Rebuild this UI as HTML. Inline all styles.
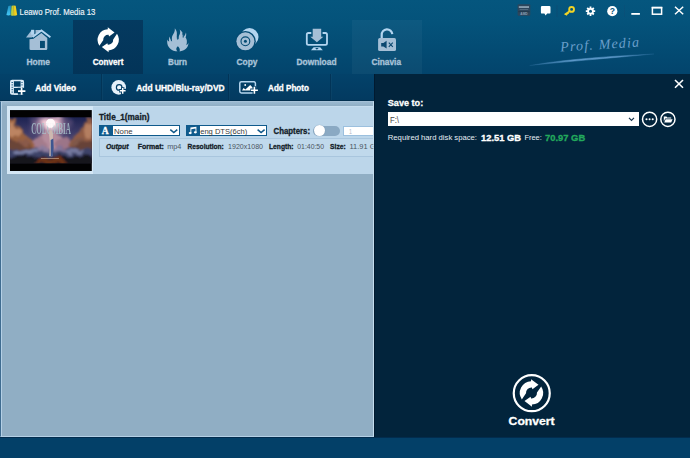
<!DOCTYPE html>
<html><head><meta charset="utf-8"><title>Leawo Prof. Media 13</title>
<style>
*{margin:0;padding:0;box-sizing:border-box}
html,body{width:690px;height:458px;overflow:hidden;background:#034068;font-family:"Liberation Sans",sans-serif}
.abs{position:absolute}
#top{left:0;top:0;width:690px;height:74px;background:linear-gradient(#05567e 0px,#04537b 22px,#034b73 50px,#03446c 74px)}
.tab{top:20px;width:69.6px;height:53.5px}
.tab.sel{background:linear-gradient(#043a60,#033458)}
.tab.cin{background:rgba(255,255,255,0.04)}
#toolbar{left:0;top:73.5px;width:690px;height:27.5px;background:linear-gradient(#03426a,#033a60);border-bottom:1px solid #02304f}
.sep{top:74px;width:1px;height:26px;background:#023457;box-shadow:1px 0 0 rgba(255,255,255,0.03)}
#content{left:0;top:100.8px;width:373.5px;height:335.9px;box-shadow:inset 1px 0 0 #b4d0e6;background:linear-gradient(#9ab9d0 0px,#90aec4 4px);border-left:1px solid #3f6c90;border-top:1px solid #a4c0d6;border-right:1px solid #c4ddee;border-bottom:1px solid #b4d0e6}
#card{left:7px;top:106.4px;width:366px;height:67.6px;background:#bcd6ea;border-top:1px solid #c6ddee}
#tframe{left:7px;top:106.4px;width:86.2px;height:67.6px;background:#d4e7f5}
#outbox{left:99px;top:138.4px;width:274px;height:18.4px;background:#c0d9ec;border:1px solid #a9c6de;border-right:none}
.dd{top:125.4px;height:10.6px;background:#fff;border:1px solid #0f5a8c}
.ddi{top:125.4px;height:10.6px;background:#0f5a8c}
#toggle{left:313.3px;top:125.5px;width:27px;height:10.5px;border-radius:5.3px;background:#8aa9c3}
#knob{left:313.8px;top:125.3px;width:10.9px;height:10.9px;border-radius:50%;background:#fff;box-shadow:0 0 1px #6d8ca8}
#chap{left:343.4px;top:125.8px;width:30px;height:10.2px;background:#fff;border:1px solid #9cc0de;border-right:none}
#bottom{left:0;top:436.7px;width:690px;height:21.3px;background:#034068;border-top:1px solid #022c4e}
#panel{left:373.5px;top:74.2px;width:316.5px;height:362.8px;background:#02243c;border-left:1px solid #011a30}
#saveinput{left:388px;top:112.3px;width:250.8px;height:13.6px;background:#fff}
svg.ov{left:0;top:0}
</style></head><body>
<div id="top" class="abs"></div>
<div class="abs tab" style="left:3.5px"></div>
<div class="abs tab sel" style="left:73.4px;width:69.2px"></div>
<div class="abs tab" style="left:142.7px"></div>
<div class="abs tab" style="left:212.3px"></div>
<div class="abs tab" style="left:281.9px"></div>
<div class="abs tab cin" style="left:351.5px;width:70.3px"></div>
<div id="toolbar" class="abs"></div>
<div class="abs sep" style="left:101px"></div>
<div class="abs sep" style="left:228px"></div>
<div class="abs sep" style="left:329.5px"></div>
<div id="content" class="abs"></div>
<div id="card" class="abs"></div>
<div id="tframe" class="abs"></div>
<div id="outbox" class="abs"></div>
<svg class="abs" style="left:10px;top:109.7px" width="81.8" height="61.4" viewBox="0 0 82 61.4">
<defs>
<linearGradient id="sky" x1="0" y1="0" x2="0" y2="1"><stop offset="0" stop-color="#1c2250"/><stop offset="0.45" stop-color="#4a4470"/><stop offset="1" stop-color="#2a2840"/></linearGradient>
<radialGradient id="glow" cx="0.5" cy="0.5" r="0.5"><stop offset="0" stop-color="#fff6f8"/><stop offset="0.28" stop-color="#f4c8d4" stop-opacity="0.95"/><stop offset="0.6" stop-color="#b088a8" stop-opacity="0.55"/><stop offset="1" stop-color="#6a5a88" stop-opacity="0"/></radialGradient>
<filter id="b1" x="-20%" y="-20%" width="140%" height="140%"><feTurbulence type="fractalNoise" baseFrequency="0.11" numOctaves="3" seed="7" result="n"/><feDisplacementMap in="SourceGraphic" in2="n" scale="9" xChannelSelector="R" yChannelSelector="G" result="d"/><feGaussianBlur in="d" stdDeviation="0.9"/></filter>
<filter id="b2" x="-20%" y="-20%" width="140%" height="140%"><feGaussianBlur stdDeviation="0.6"/></filter>
<clipPath id="fr"><rect x="0" y="7.1" width="82" height="46.2"/></clipPath>
</defs>
<rect width="82" height="61.4" fill="#020203"/>
<g clip-path="url(#fr)">
<rect x="0" y="7" width="82" height="47" fill="url(#sky)"/>
<g filter="url(#b1)">
<ellipse cx="40.5" cy="14" rx="24" ry="17" fill="url(#glow)"/>
<ellipse cx="41" cy="30" rx="11" ry="9" fill="#b48c9c"/>
<ellipse cx="30" cy="34" rx="8" ry="6.5" fill="#a47c8c"/>
<ellipse cx="53" cy="34" rx="8" ry="6.5" fill="#9c7488"/>
<path d="M-2,8 L4,9 L9,17 L14,23 L20,29 L25,36 L20,41 L-2,41 Z" fill="#98603f"/>
<path d="M-2,12 L4,13 L10,21 L8,27 L-2,25 Z" fill="#bc8462"/>
<path d="M8,30 L16,29 L21,35 L12,38 Z" fill="#8a5a48"/>
<path d="M84,8 L78,9 L73,17 L68,23 L62,29 L57,36 L62,41 L84,41 Z" fill="#905c44"/>
<path d="M84,12 L78,13 L73,21 L75,28 L84,26 Z" fill="#b47e60"/>
<path d="M74,30 L66,29 L61,35 L70,38 Z" fill="#80584a"/>
<path d="M-2,30 L10,33 L22,38 L-2,41 Z" fill="#6a4438"/><path d="M84,30 L72,33 L60,38 L84,41 Z" fill="#664238"/><rect x="-2" y="38.5" width="86" height="9" fill="#3e4368"/>
<ellipse cx="16" cy="41.5" rx="11" ry="2.6" fill="#7a80a6"/>
<ellipse cx="64" cy="41.5" rx="11" ry="2.6" fill="#74789e"/>
<ellipse cx="33" cy="40" rx="6" ry="3" fill="#8c7c9c"/>
<ellipse cx="49" cy="40" rx="6" ry="3" fill="#84749a"/>
<rect x="-2" y="46.5" width="86" height="9" fill="#16131e"/>
<path d="M24,54 L31,47.5 L50,47.5 L57,54 Z" fill="#6c3018"/>
</g>
<g filter="url(#b2)">
<ellipse cx="40.6" cy="13" rx="4.6" ry="4.4" fill="#fff8fa"/>
<path d="M39.6,20.6 L42,20.6 L43,24 L43.2,34 L42.6,46.4 L39.4,46.4 L40,34 L39.2,24 Z" fill="#cdb8b0"/>
<path d="M40.8,30 L43.4,28.4 L43.8,38 L42.8,46.4 L40.8,46.4 Z" fill="#3c5690"/>
<rect x="31" y="48" width="18" height="1" fill="#c8a890" opacity="0.7"/>
</g>
<text x="21.3" y="24.4" textLength="39.8" lengthAdjust="spacingAndGlyphs" font-family="Liberation Serif, serif" font-weight="bold" font-size="16" fill="#a9c3cc" opacity="0.8">COLUMBIA</text>
<g filter="url(#b2)"><ellipse cx="40.6" cy="13.4" rx="3.6" ry="4.4" fill="#fff8fa" opacity="0.9"/><path d="M39.6,20.6 L42,20.6 L42.8,26 L39.6,26 Z" fill="#cdb8b0"/></g>
</g>
</svg>
<div class="abs ddi" style="left:99px;width:13px"></div>
<div class="abs dd" style="left:111.5px;width:68.6px"></div>
<div class="abs ddi" style="left:186.3px;width:13px"></div>
<div class="abs dd" style="left:198.8px;width:68.3px"></div>
<div id="toggle" class="abs"></div><div id="knob" class="abs"></div>
<div id="chap" class="abs"></div>
<div id="panel" class="abs"></div>
<div id="saveinput" class="abs"></div>
<div id="bottom" class="abs"></div>
<svg class="abs ov" width="690" height="458" viewBox="0 0 690 458">
<defs><clipPath id="cardclip"><rect x="0" y="100" width="373.3" height="80"/></clipPath></defs>
<g>
<defs><linearGradient id="lg1" x1="0" y1="0" x2="0" y2="1"><stop offset="0" stop-color="#1f8fc0"/><stop offset="1" stop-color="#45c8f6"/></linearGradient>
<linearGradient id="lg2" x1="0" y1="0" x2="1" y2="0"><stop offset="0" stop-color="#8fc050"/><stop offset="1" stop-color="#e4d830"/></linearGradient></defs>
<path d="M8.4,5.9 L10.9,5.6 L10.5,15 Q8.4,15.8 6.4,15 Z" fill="url(#lg1)"/>
<path d="M11.5,5.8 L13.6,5.5 L14,15.6 Q12.2,16 10.7,15.2 Z" fill="url(#lg2)"/>
<path d="M13.6,5.5 L15.7,5.8 L17.2,15 Q15.6,15.9 14,15.6 Z" fill="#f2d01f"/>
<path d="M13.7,6 L14,15.4" stroke="#c8a818" stroke-width="0.5" fill="none"/>
</g>
<g>
<path d="M26,37.5 L31.4,30.6 L35.4,30 L42.4,30 L41.4,31.2 L33.4,37.5 Z" fill="#9fbcd5"/>
<rect x="34.2" y="29.6" width="1.3" height="4.6" fill="#044d76"/>
<rect x="31.1" y="29.8" width="3.1" height="4.9" fill="#b3d5f0"/>
<path d="M29.5,39.2 L33.4,38.8 L41.4,33 L47.3,38 L47.3,48.7 Q47.3,50 46,50 L30.8,50 Q29.5,50 29.5,48.7 Z" fill="#a5bfd6"/>
<path d="M32.2,38.2 L41.4,31 L49.6,38" fill="none" stroke="#044a72" stroke-width="1.5"/>
<path d="M32.6,36.9 L41.4,30.4 L50.4,37.2" fill="none" stroke="#b3d5f0" stroke-width="1.9" stroke-linejoin="miter"/>
<rect x="40" y="40.9" width="4.9" height="7.1" fill="#044a72"/>
</g>
<path d="M99.41,45.73 A10.60,10.60 0 0 1 107.83,29.21 L107.76,27.31 L114.56,32.48 L109.05,36.40 L108.55,34.81 A5.00,5.00 0 0 0 103.21,40.15 Z" fill="#fff"/><path d="M116.99,33.87 A10.60,10.60 0 0 1 108.57,50.39 L108.64,52.29 L101.84,47.12 L107.35,43.20 L107.85,44.79 A5.00,5.00 0 0 0 113.19,39.45 Z" fill="#fff"/>
<path fill="#a5bfd6" d="M177.6,51.3 C175.5,49.6 176.3,47.3 177.9,46.2 C179.2,47.4 180.4,49.2 179.6,51.4
C184.5,51 188.6,47.6 188.5,42.6 C188.2,44 187.3,45 186.3,45.3 C187.4,42.3 187,39.3 185.6,37.6 C186.4,35.6 186.4,33.8 185.9,32.6 C185.6,34.6 184.6,35.8 183.6,36.8
C183.4,34 182.2,31.2 179.6,29.4 C180.6,31.6 180.2,33.6 179.2,35.2 C178.6,36.6 178.6,38 179,39.2 C177.6,38.4 176.6,36.8 176.8,35
C177.2,32.4 176.4,30 174.8,28.3 C175.2,31 174,33.2 172.8,35 C171.8,36.6 171.4,38.6 171.8,40.4 C170.6,39.6 169.8,38.2 169.8,36.6
C168.8,38.4 168.8,40 169.2,41.6 C168.2,41.2 167.6,40.4 167.4,39.6 C166.2,45.2 169.6,50.4 175.6,51.3 Z"/>
<path d="M177.7,39.6 C176.9,37.6 177.3,35.4 178.2,33.6 M183.2,37.6 C183.4,36 183.2,34.6 182.6,33.4 M171.6,41.2 C171,39.6 171,38 171.6,36.6" fill="none" stroke="#044d76" stroke-width="1"/>
<g>
<circle cx="249.5" cy="37" r="9" fill="#b3d5f0"/>
<circle cx="245.4" cy="41.3" r="10.4" fill="#044a72"/>
<circle cx="245.4" cy="41.3" r="9" fill="#a5bfd6"/>
<circle cx="245.4" cy="41.3" r="4.4" fill="none" stroke="#044a72" stroke-width="1.1"/>
<circle cx="245.4" cy="41.3" r="1.5" fill="#044a72"/>
</g>
<g>
<path d="M311.3,33 L308.4,33 Q306.8,33 306.8,34.6 L306.8,43.2 Q306.8,44.8 308.4,44.8 L325.4,44.8 Q327,44.8 327,43.2 L327,34.6 Q327,33 325.4,33 L322.6,33" fill="none" stroke="#b3d5f0" stroke-width="1.8"/>
<path d="M312.7,28.7 L321.2,28.7 L321.2,36.7 L323.4,36.7 L316.9,42.2 L310.3,36.7 L312.7,36.7 Z" fill="#a5bfd6"/>
<path d="M313.6,47.3 L320.2,47.3 L322.8,50.3 L311,50.3 Z" fill="#b3d5f0"/>
<path d="M315.2,48 L316.9,49.8 L318.6,48 Z" fill="#044a72"/>
</g>
<g>
<path d="M381.7,38.4 L381.7,35 A5.3,5.3 0 0 1 392.3,34.2" fill="none" stroke="#b3d5f0" stroke-width="2.2"/>
<rect x="378.1" y="38.1" width="17.9" height="13" rx="1.6" fill="#a5bfd6"/>
<path d="M381.2,43 L383.4,43 L386.6,40.8 L386.6,48.6 L383.4,46.4 L381.2,46.4 Z" fill="#0c4870"/>
<path d="M388.8,42.6 L392.8,46.8 M392.8,42.6 L388.8,46.8" stroke="#0c4870" stroke-width="1.1" fill="none"/>
</g>
<g>
<rect x="10.7" y="80.5" width="12.7" height="13.6" rx="1.4" fill="none" stroke="#dcecf8" stroke-width="1.4"/>
<rect x="10.7" y="80.5" width="3.2" height="13.6" fill="#dcecf8"/>
<rect x="20.6" y="80.5" width="2.8" height="7" fill="#dcecf8"/>
<rect x="13.9" y="86.7" width="8" height="1.3" fill="#dcecf8"/>
<g fill="#1d5a84"><rect x="11.5" y="82" width="1.4" height="1"/><rect x="11.5" y="84.4" width="1.4" height="1"/><rect x="11.5" y="86.8" width="1.4" height="1"/><rect x="11.5" y="89.2" width="1.4" height="1"/><rect x="11.5" y="91.6" width="1.4" height="1"/><rect x="21.4" y="82" width="1.2" height="1"/><rect x="21.4" y="84.4" width="1.2" height="1"/></g>
<rect x="17.6" y="87.8" width="8" height="6.8" fill="#033d64"/>
<rect x="13.9" y="93.4" width="4" height="1.4" fill="#dcecf8"/>
<path d="M21.6,87.6 V94.8 M18,91.2 H25.4" stroke="#fff" stroke-width="1.7"/>
</g>
<g>
<circle cx="118.7" cy="87.4" r="7.3" fill="#e6f1fa"/>
<circle cx="119.2" cy="87.4" r="2.8" fill="none" stroke="#033d64" stroke-width="1.2"/>
<circle cx="119.2" cy="87.4" r="1.4" fill="#f4f9fd"/>
<path d="M122.7,87.2 V94.4 M119.1,90.8 H126.3" stroke="#033d64" stroke-width="3.4"/>
<path d="M122.7,88 V93.8 M119.8,90.8 H125.6" stroke="#fff" stroke-width="1.5"/>
</g>
<g>
<rect x="239.8" y="81.7" width="15.6" height="11.2" rx="1.6" fill="none" stroke="#b6d6ef" stroke-width="1.5"/>
<path d="M242,90.6 L243.6,88 L245.4,89.4 L250.2,85 L254,89 L254,90.6 Z" fill="#fff"/>
<circle cx="245.2" cy="85" r="0.9" fill="#fff"/>
<path d="M254.4,86.2 V94.4 M250.3,90.3 H258.5" stroke="#033d64" stroke-width="3.6"/>
<path d="M254.4,86.8 V93.8 M250.9,90.3 H257.9" stroke="#fff" stroke-width="1.6"/>
</g>
<g>
<rect x="517.6" y="4.2" width="12.7" height="11.6" rx="1" fill="#2d465c"/>
<rect x="518.8" y="6.3" width="10.2" height="1.5" fill="#9db2c3"/>
<rect x="519.6" y="9.2" width="8.6" height="0.8" fill="#5b7287"/>
<rect x="518.2" y="11.4" width="11.5" height="0.7" fill="#1f3548"/>
<path d="M540.9,7.3 Q540.9,6.1 542.1,6.1 L549.3,6.1 Q550.5,6.1 550.5,7.3 L550.5,12.4 Q550.5,13.6 549.3,13.6 L547.2,13.6 L545.6,15.4 L544.4,13.6 L542.1,13.6 Q540.9,13.6 540.9,12.4 Z" fill="#fff"/>
<rect x="556.5" y="5" width="1" height="12" fill="#0e4a74" opacity="0.7"/>
<g stroke="#f2d425" fill="none">
<circle cx="571.6" cy="9.4" r="2.4" stroke-width="1.9"/>
<path d="M569.6,11.2 L564.6,14.6 M566,13.6 L567,15.2 M567.6,12.6 L568.4,13.9" stroke-width="1.7"/>
</g>
<g fill="#fff">
<circle cx="590.5" cy="11.2" r="3.3"/>
<g stroke="#fff" stroke-width="1.8">
<path d="M590.5,6.5 V15.9 M585.8,11.2 H595.2 M587.2,7.9 L593.8,14.5 M593.8,7.9 L587.2,14.5"/>
</g>
</g>
<circle cx="590.5" cy="11.2" r="1.5" fill="#05547c"/>
<circle cx="612.3" cy="11.2" r="5.1" fill="#fff"/>
<rect x="624" y="5" width="1" height="12" fill="#0e4a74" opacity="0.4"/>
<rect x="631.3" y="13" width="8.6" height="1.8" fill="#fff"/>
<rect x="652.4" y="7.6" width="9.2" height="6.6" fill="none" stroke="#fff" stroke-width="1.5"/>
<rect x="651.7" y="6.8" width="10.6" height="1.6" fill="#fff"/>
<path d="M675,6.8 L683.2,14.2 M683.2,6.8 L675,14.2" stroke="#fff" stroke-width="1.5"/>
</g>
<defs><linearGradient id="sw" x1="0" y1="0" x2="1" y2="0"><stop offset="0" stop-color="#4f8ec2" stop-opacity="0.15"/><stop offset="0.35" stop-color="#5f9bcc" stop-opacity="0.95"/><stop offset="0.7" stop-color="#5f9bcc" stop-opacity="0.9"/><stop offset="1" stop-color="#4f8ec2" stop-opacity="0.2"/></linearGradient></defs><path d="M529.5,65.6 C560,59.9 610,56.2 654,54.0 C612,57.9 562,61.9 529.5,65.6 Z" fill="url(#sw)" stroke="url(#sw)" stroke-width="0.5"/>
<g>
<path d="M675,80 L683,87.8 M683,80 L675,87.8" stroke="#fff" stroke-width="1.6"/>
<circle cx="649.6" cy="119.3" r="7.1" fill="none" stroke="#fff" stroke-width="1.5"/>
<circle cx="646.5" cy="119.3" r="1.05" fill="#fff"/><circle cx="649.6" cy="119.3" r="1.05" fill="#fff"/><circle cx="652.7" cy="119.3" r="1.05" fill="#fff"/>
<circle cx="667.9" cy="119.3" r="7.1" fill="none" stroke="#fff" stroke-width="1.5"/>
<path d="M663.8,116.6 L666.4,116.6 L667.2,117.5 L671.2,117.5 L671.2,118.6 L665.2,118.6 L663.8,121.6 Z" fill="#fff"/>
<path d="M665.6,119.2 L672.6,119.2 L671.2,122.4 L664.2,122.4 Z" fill="#fff"/>
<path d="M629,117.8 L631.5,120.4 L634,117.8" fill="none" stroke="#14324d" stroke-width="1.2"/>
</g>
<circle cx="531.75" cy="393.2" r="18.0" fill="none" stroke="#fff" stroke-width="2.2"/>
<path d="M521.83,399.42 A11.66,11.66 0 0 1 531.09,381.25 L531.02,379.16 L538.50,384.85 L532.43,389.16 L531.88,387.41 A5.50,5.50 0 0 0 526.01,393.28 Z" fill="#fff"/><path d="M541.17,386.38 A11.66,11.66 0 0 1 531.91,404.55 L531.98,406.64 L524.50,400.95 L530.57,396.64 L531.12,398.39 A5.50,5.50 0 0 0 536.99,392.52 Z" fill="#fff"/>
<path d="M170.3,129.6 L173.8,132.6 L177.3,129.6" fill="none" stroke="#0f5788" stroke-width="1.5"/>
<path d="M257.6,129.6 L261.1,132.6 L264.6,129.6" fill="none" stroke="#0f5788" stroke-width="1.5"/>
<g fill="#fff"><path d="M190.4,127.6 L196.4,126.8 L196.4,132.4 L195.5,132.4 L195.5,128.6 L191.3,129.2 L191.3,133.2 L190.4,133.2 Z"/><ellipse cx="190.2" cy="133.1" rx="1.5" ry="1.15"/><ellipse cx="195.3" cy="132.3" rx="1.5" ry="1.15"/></g>
<text x="19.60" y="14.80" textLength="75.70" lengthAdjust="spacingAndGlyphs" font-family="Liberation Sans, sans-serif" font-size="9.3" font-weight="normal" font-style="normal" fill="#f0f5fa" stroke="#f0f5fa" stroke-width="0.15" >Leawo Prof. Media 13</text>
<text x="26.50" y="65.20" textLength="23.50" lengthAdjust="spacingAndGlyphs" font-family="Liberation Sans, sans-serif" font-size="8.2" font-weight="bold" font-style="normal" fill="#a9c3d9" stroke="#a9c3d9" stroke-width="0.3" >Home</text>
<text x="92.70" y="65.20" textLength="30.80" lengthAdjust="spacingAndGlyphs" font-family="Liberation Sans, sans-serif" font-size="8.2" font-weight="bold" font-style="normal" fill="#fff" stroke="#fff" stroke-width="0.3" >Convert</text>
<text x="168.00" y="65.20" textLength="19.00" lengthAdjust="spacingAndGlyphs" font-family="Liberation Sans, sans-serif" font-size="8.2" font-weight="bold" font-style="normal" fill="#a9c3d9" stroke="#a9c3d9" stroke-width="0.3" >Burn</text>
<text x="236.50" y="65.20" textLength="21.00" lengthAdjust="spacingAndGlyphs" font-family="Liberation Sans, sans-serif" font-size="8.2" font-weight="bold" font-style="normal" fill="#a9c3d9" stroke="#a9c3d9" stroke-width="0.3" >Copy</text>
<text x="296.50" y="65.20" textLength="40.00" lengthAdjust="spacingAndGlyphs" font-family="Liberation Sans, sans-serif" font-size="8.2" font-weight="bold" font-style="normal" fill="#a9c3d9" stroke="#a9c3d9" stroke-width="0.3" >Download</text>
<text x="371.50" y="65.20" textLength="29.50" lengthAdjust="spacingAndGlyphs" font-family="Liberation Sans, sans-serif" font-size="8.2" font-weight="bold" font-style="normal" fill="#a9c3d9" stroke="#a9c3d9" stroke-width="0.3" >Cinavia</text>
<text x="35.30" y="90.70" textLength="40.70" lengthAdjust="spacingAndGlyphs" font-family="Liberation Sans, sans-serif" font-size="8.2" font-weight="bold" font-style="normal" fill="#fff" stroke="#fff" stroke-width="0.3" >Add Video</text>
<text x="136.20" y="90.70" textLength="88.40" lengthAdjust="spacingAndGlyphs" font-family="Liberation Sans, sans-serif" font-size="8.2" font-weight="bold" font-style="normal" fill="#fff" stroke="#fff" stroke-width="0.3" >Add UHD/Blu-ray/DVD</text>
<text x="268.10" y="90.70" textLength="40.80" lengthAdjust="spacingAndGlyphs" font-family="Liberation Sans, sans-serif" font-size="8.2" font-weight="bold" font-style="normal" fill="#fff" stroke="#fff" stroke-width="0.3" >Add Photo</text>
<text x="99.00" y="120.30" textLength="50.40" lengthAdjust="spacingAndGlyphs" font-family="Liberation Sans, sans-serif" font-size="8.2" font-weight="bold" font-style="normal" fill="#131d28" stroke="#131d28" stroke-width="0.3" >Title_1(main)</text>
<text x="114.00" y="133.70" textLength="18.60" lengthAdjust="spacingAndGlyphs" font-family="Liberation Sans, sans-serif" font-size="7.6" font-weight="normal" font-style="normal" fill="#3a3a3a"  >None</text>
<text x="200.20" y="134.00" textLength="47.10" lengthAdjust="spacingAndGlyphs" font-family="Liberation Sans, sans-serif" font-size="7.6" font-weight="normal" font-style="normal" fill="#3a3a3a"  >eng DTS(6ch)</text>
<text x="273.50" y="134.30" textLength="36.50" lengthAdjust="spacingAndGlyphs" font-family="Liberation Sans, sans-serif" font-size="8.2" font-weight="bold" font-style="normal" fill="#131d28" stroke="#131d28" stroke-width="0.3" >Chapters:</text>
<text x="349.00" y="133.80" textLength="3.00" lengthAdjust="spacingAndGlyphs" font-family="Liberation Sans, sans-serif" font-size="7.6" font-weight="normal" font-style="normal" fill="#b4bcc4"  >1</text>
<text x="106.00" y="149.20" textLength="22.60" lengthAdjust="spacingAndGlyphs" font-family="Liberation Sans, sans-serif" font-size="7.2" font-weight="bold" font-style="italic" fill="#131d28" stroke="#131d28" stroke-width="0.3" >Output</text>
<text x="137.80" y="149.20" textLength="26.00" lengthAdjust="spacingAndGlyphs" font-family="Liberation Sans, sans-serif" font-size="7.2" font-weight="bold" font-style="normal" fill="#131d28" stroke="#131d28" stroke-width="0.3" >Format:</text>
<text x="167.20" y="149.20" textLength="14.10" lengthAdjust="spacingAndGlyphs" font-family="Liberation Sans, sans-serif" font-size="7.2" font-weight="normal" font-style="normal" fill="#4a5560"  >mp4</text>
<text x="187.50" y="149.20" textLength="36.30" lengthAdjust="spacingAndGlyphs" font-family="Liberation Sans, sans-serif" font-size="7.2" font-weight="bold" font-style="normal" fill="#131d28" stroke="#131d28" stroke-width="0.3" >Resolution:</text>
<text x="228.10" y="149.20" textLength="34.90" lengthAdjust="spacingAndGlyphs" font-family="Liberation Sans, sans-serif" font-size="7.2" font-weight="normal" font-style="normal" fill="#4a5560"  >1920x1080</text>
<text x="269.00" y="149.20" textLength="24.50" lengthAdjust="spacingAndGlyphs" font-family="Liberation Sans, sans-serif" font-size="7.2" font-weight="bold" font-style="normal" fill="#131d28" stroke="#131d28" stroke-width="0.3" >Length:</text>
<text x="297.30" y="149.20" textLength="26.70" lengthAdjust="spacingAndGlyphs" font-family="Liberation Sans, sans-serif" font-size="7.2" font-weight="normal" font-style="normal" fill="#4a5560"  >01:40:50</text>
<text x="330.10" y="149.20" textLength="15.60" lengthAdjust="spacingAndGlyphs" font-family="Liberation Sans, sans-serif" font-size="7.2" font-weight="bold" font-style="normal" fill="#131d28" stroke="#131d28" stroke-width="0.3" >Size:</text>
<text x="349.40" y="149.20" textLength="31.10" lengthAdjust="spacingAndGlyphs" font-family="Liberation Sans, sans-serif" font-size="7.2" font-weight="normal" font-style="normal" fill="#4a5560"  clip-path="url(#cardclip)">11.91 GB</text>
<text x="387.80" y="106.20" textLength="35.40" lengthAdjust="spacingAndGlyphs" font-family="Liberation Sans, sans-serif" font-size="9.4" font-weight="bold" font-style="normal" fill="#fff" stroke="#fff" stroke-width="0.3" >Save to:</text>
<text x="390.00" y="122.90" textLength="9.00" lengthAdjust="spacingAndGlyphs" font-family="Liberation Sans, sans-serif" font-size="8.2" font-weight="normal" font-style="normal" fill="#444"  >F:\</text>
<text x="387.80" y="140.40" textLength="89.20" lengthAdjust="spacingAndGlyphs" font-family="Liberation Sans, sans-serif" font-size="8.0" font-weight="normal" font-style="normal" fill="#e8eef4"  >Required hard disk space:</text>
<text x="481.00" y="140.60" textLength="40.00" lengthAdjust="spacingAndGlyphs" font-family="Liberation Sans, sans-serif" font-size="9.2" font-weight="bold" font-style="normal" fill="#fff" stroke="#fff" stroke-width="0.3" >12.51 GB</text>
<text x="524.40" y="140.40" textLength="17.40" lengthAdjust="spacingAndGlyphs" font-family="Liberation Sans, sans-serif" font-size="8.0" font-weight="normal" font-style="normal" fill="#e8eef4"  >Free:</text>
<text x="545.00" y="140.60" textLength="40.20" lengthAdjust="spacingAndGlyphs" font-family="Liberation Sans, sans-serif" font-size="9.2" font-weight="bold" font-style="normal" fill="#22a95c" stroke="#22a95c" stroke-width="0.3" >70.97 GB</text>
<text x="508.60" y="425.30" textLength="46.00" lengthAdjust="spacingAndGlyphs" font-family="Liberation Sans, sans-serif" font-size="10.6" font-weight="bold" font-style="normal" fill="#fff" stroke="#fff" stroke-width="0.3" >Convert</text>
<text x="524" y="15" text-anchor="middle" font-family="Liberation Sans, sans-serif" font-weight="bold" font-size="3.2" fill="#8aa0b4">AMD</text>
<text x="612.3" y="14.3" text-anchor="middle" font-family="Liberation Sans, sans-serif" font-weight="bold" font-size="8.6" fill="#05547c">?</text>
<text x="560.5" y="51.6" textLength="79" lengthAdjust="spacing" transform="rotate(-3.6 560.5 51.6)" font-family="Liberation Serif, serif" font-style="italic" font-size="14" fill="#6a9fcb">Prof. Media</text>
<text x="105.2" y="133.9" text-anchor="middle" font-family="Liberation Serif, serif" font-weight="bold" font-size="9.6" fill="#fff" stroke="#fff" stroke-width="0.3">A</text>
</svg>
</body></html>
